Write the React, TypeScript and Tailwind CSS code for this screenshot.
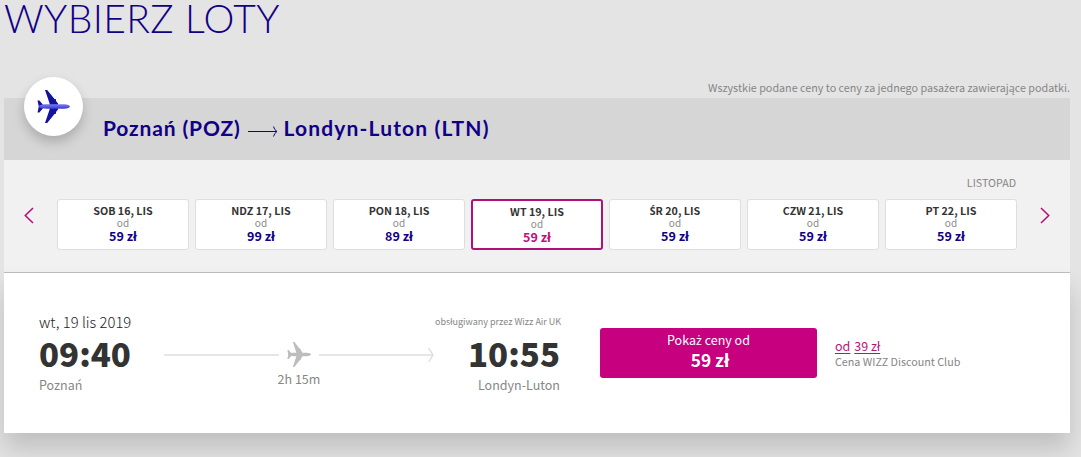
import type { ReactNode } from "react";

type Day = { date: ReactNode; price: string };

const S = <span className="font-['Noto_Sans',sans-serif] text-[0.98em] leading-none">Ś</span>;
const Z = <span className="font-['Noto_Sans',sans-serif] text-[1em] leading-none">ż</span>;

const days: Day[] = [
  { date: "SOB 16, LIS", price: "59 zł" },
  { date: "NDZ 17, LIS", price: "99 zł" },
  { date: "PON 18, LIS", price: "89 zł" },
  { date: "WT 19, LIS", price: "59 zł" },
  { date: <>{S}R 20, LIS</>, price: "59 zł" },
  { date: "CZW 21, LIS", price: "59 zł" },
  { date: "PT 22, LIS", price: "59 zł" },
];

const selectedDay = 3;

const WINGS =
  "M8 0 L10.2 0 L17.5 9 L19 9.2 L19 11 L21 13.6 L21 19.4 L19 22 L19 23.8 L17.5 24 L10.2 33 L8 33 L12.6 19.5 L12.6 13.5 Z";
const TAIL = "M0.5 10.5 L2.4 10.5 L5.8 14.5 L5.8 18.5 L2.4 22.5 L0.5 22.5 L1.8 16.5 Z";
const BODY = "M1.5 16.5 C3 14.6 6 14.3 10 14.3 L27 14.3 C30.5 14.4 33 15.5 33 16.5 C33 17.5 30.5 18.6 27 18.7 L10 18.7 C6 18.7 3 18.4 1.5 16.5 Z";

function BluePlane() {
  return (
    <svg width="33" height="33" viewBox="0 0 33 33">
      <defs>
        <linearGradient id="body" x1="0" y1="0" x2="0" y2="1">
          <stop offset="0" stopColor="#7b7bf0" />
          <stop offset="1" stopColor="#3c3cd2" />
        </linearGradient>
      </defs>
      <path d={WINGS} fill="#12129c" />
      <path d={TAIL} fill="#12129c" />
      <path d={BODY} fill="url(#body)" />
    </svg>
  );
}

function GreyPlane() {
  return (
    <svg width="24" height="25" viewBox="0 0 33 33" preserveAspectRatio="none" fill="#bdbdbd">
      <path d={WINGS} />
      <path d={TAIL} />
      <path d={BODY} />
    </svg>
  );
}

function Chevron({ left }: { left?: boolean }) {
  return (
    <svg width="10" height="17" viewBox="0 0 10 17" fill="none" stroke="#b5147c" strokeWidth="1.6">
      <path d={left ? "M9 1 L1.3 8.5 L9 16" : "M1 1 L8.7 8.5 L1 16"} />
    </svg>
  );
}

function DayCard({ day, selected }: { day: Day; selected: boolean }) {
  return (
    <button
      className={
        selected
          ? "flex h-[51px] w-[132px] flex-col items-center rounded-[3px] border-2 border-[#b01079] bg-white pt-[4px]"
          : "flex h-[51px] w-[132px] flex-col items-center rounded-[3px] border border-[#dedede] bg-white pt-[4px]"
      }
    >
      <span className="h-[14px] text-[10.7px] leading-[14px] font-bold text-[#333]">{day.date}</span>
      <span className="h-[11px] text-[10px] leading-[9px] text-[#8c8c8c]">od</span>
      <span className={selected ? "text-[12.5px] leading-[14px] font-bold text-[#c0107e]" : "text-[12.5px] leading-[14px] font-bold text-[#110086]"}>
        {day.price}
      </span>
    </button>
  );
}

export default function App() {
  return (
    <div className="h-[457px] w-[1081px] overflow-hidden bg-[#e4e4e4] pl-1 font-['Noto_Sans_CJK_JP','Noto_Sans',sans-serif]">
      <h1 className="h-[77px] font-['Lato',sans-serif] text-[39px] leading-[37px] font-light tracking-[0.4px] whitespace-nowrap text-[#110086]">
        WYBIERZ LOTY
      </h1>

      <p className="h-[21px] w-[1066px] pt-[2px] text-right text-[10.75px] leading-[18px] whitespace-nowrap text-[#868686]">
        Wszystkie podane ceny to ceny za jednego pasa{Z}era zawierające podatki.
      </p>

      <main className="w-[1066px]">
        <header className="relative flex h-[62px] items-center bg-[#d6d6d6] pl-[99px]">
          <div className="absolute top-[-21px] left-[20px] flex h-[59px] w-[59px] items-center justify-center rounded-full bg-white shadow-[0_6px_12px_rgba(0,0,0,0.2)]">
            <BluePlane />
          </div>
          <h2 className="flex items-center pb-[2px] font-['Lato',sans-serif] text-[21px] leading-[26px] font-bold whitespace-nowrap text-[#110086]">
            <span className="tracking-[0.85px]">Poznań (POZ)</span>
            <svg className="mt-[5px] mr-[6px] ml-[7px]" width="30" height="12" viewBox="0 0 30 12" fill="none" stroke="#110086">
              <path d="M0 6.5 H28.5 M25.5 1.5 Q26.5 5 29 6.5 Q26.5 8 25.5 11.5" />
            </svg>
            <span className="tracking-[1.15px]">Londyn-Luton (LTN)</span>
          </h2>
        </header>

        <section className="h-[113px] border-b border-[#bebebe] bg-[#f1f1f1] pt-[14px]">
          <p className="h-[25px] pr-[54px] text-right text-[10.7px] leading-[18px] text-[#868686]">LISTOPAD</p>
          <div className="flex items-start">
            <span className="flex w-[53px] pt-[8px] pl-[20px]"><Chevron left /></span>
            <div className="flex gap-[6px]">
              {days.map((day, i) => (
                <DayCard key={i} day={day} selected={i === selectedDay} />
              ))}
            </div>
            <span className="flex pt-[8px] pl-[23px]"><Chevron /></span>
          </div>
        </section>

        <section className="flex h-[160px] bg-white pl-[35px] whitespace-nowrap shadow-[0_16px_24px_rgba(0,0,0,0.16)]">
          <div className="w-[125px] pt-[39px]">
            <p className="text-[14.8px] leading-[20px] font-light text-[#222]">wt, 19 lis 2019</p>
            <p className="text-[33px] leading-[42px] font-black text-[#333]">09:40</p>
            <p className="pt-px text-[12.5px] leading-[20px] text-[#868686]">Poznań</p>
          </div>
          <div className="w-[271px] pt-[68px]">
            <div className="flex h-[27px] items-center">
              <span className="h-[2px] w-[115px] bg-[#e6e6e6]" />
              <span className="mx-[8px]"><GreyPlane /></span>
              <span className="h-[2px] w-[113px] bg-[#e6e6e6]" />
              <svg className="-ml-[4px]" width="6" height="16" viewBox="0 0 6 16" fill="none" stroke="#dadada" strokeWidth="1.3">
                <path d="M0.6 1 L5 8 L0.6 15" />
              </svg>
            </div>
            <p className="pt-[2px] pr-px text-center text-[12.5px] leading-[18px] text-[#868686]">2h 15m</p>
          </div>
          <div className="w-[125px] pt-[40px] text-right">
            <p className="pr-px text-[9px] leading-[18px] text-[#868686]">obsługiwany przez Wizz Air UK</p>
            <p className="pt-px text-[33px] leading-[42px] font-black text-[#333]">10:55</p>
            <p className="pt-px text-[12.5px] leading-[20px] text-[#868686]">Londyn-Luton</p>
          </div>
          <button className="mt-[55px] ml-[40px] flex h-[50px] w-[217px] flex-col items-center rounded-[3px] bg-[#c6007e] pt-[4px] text-white">
            <span className="h-[16px] text-[12.5px] leading-[16px]">Poka{Z} ceny od</span>
            <span className="pt-px pl-[3px] text-[17.3px] leading-[22px] font-bold">59 zł</span>
          </button>
          <div className="pt-[64px] pl-[18px]">
            <p className="flex gap-[4px] text-[12.5px] leading-[17px] text-[#b5147c] underline underline-offset-2">
              <span>od</span>
              <span>39 zł</span>
            </p>
            <p className="text-[10.75px] leading-[15px] text-[#868686]">Cena WIZZ Discount Club</p>
          </div>
        </section>
      </main>
    </div>
  );
}
